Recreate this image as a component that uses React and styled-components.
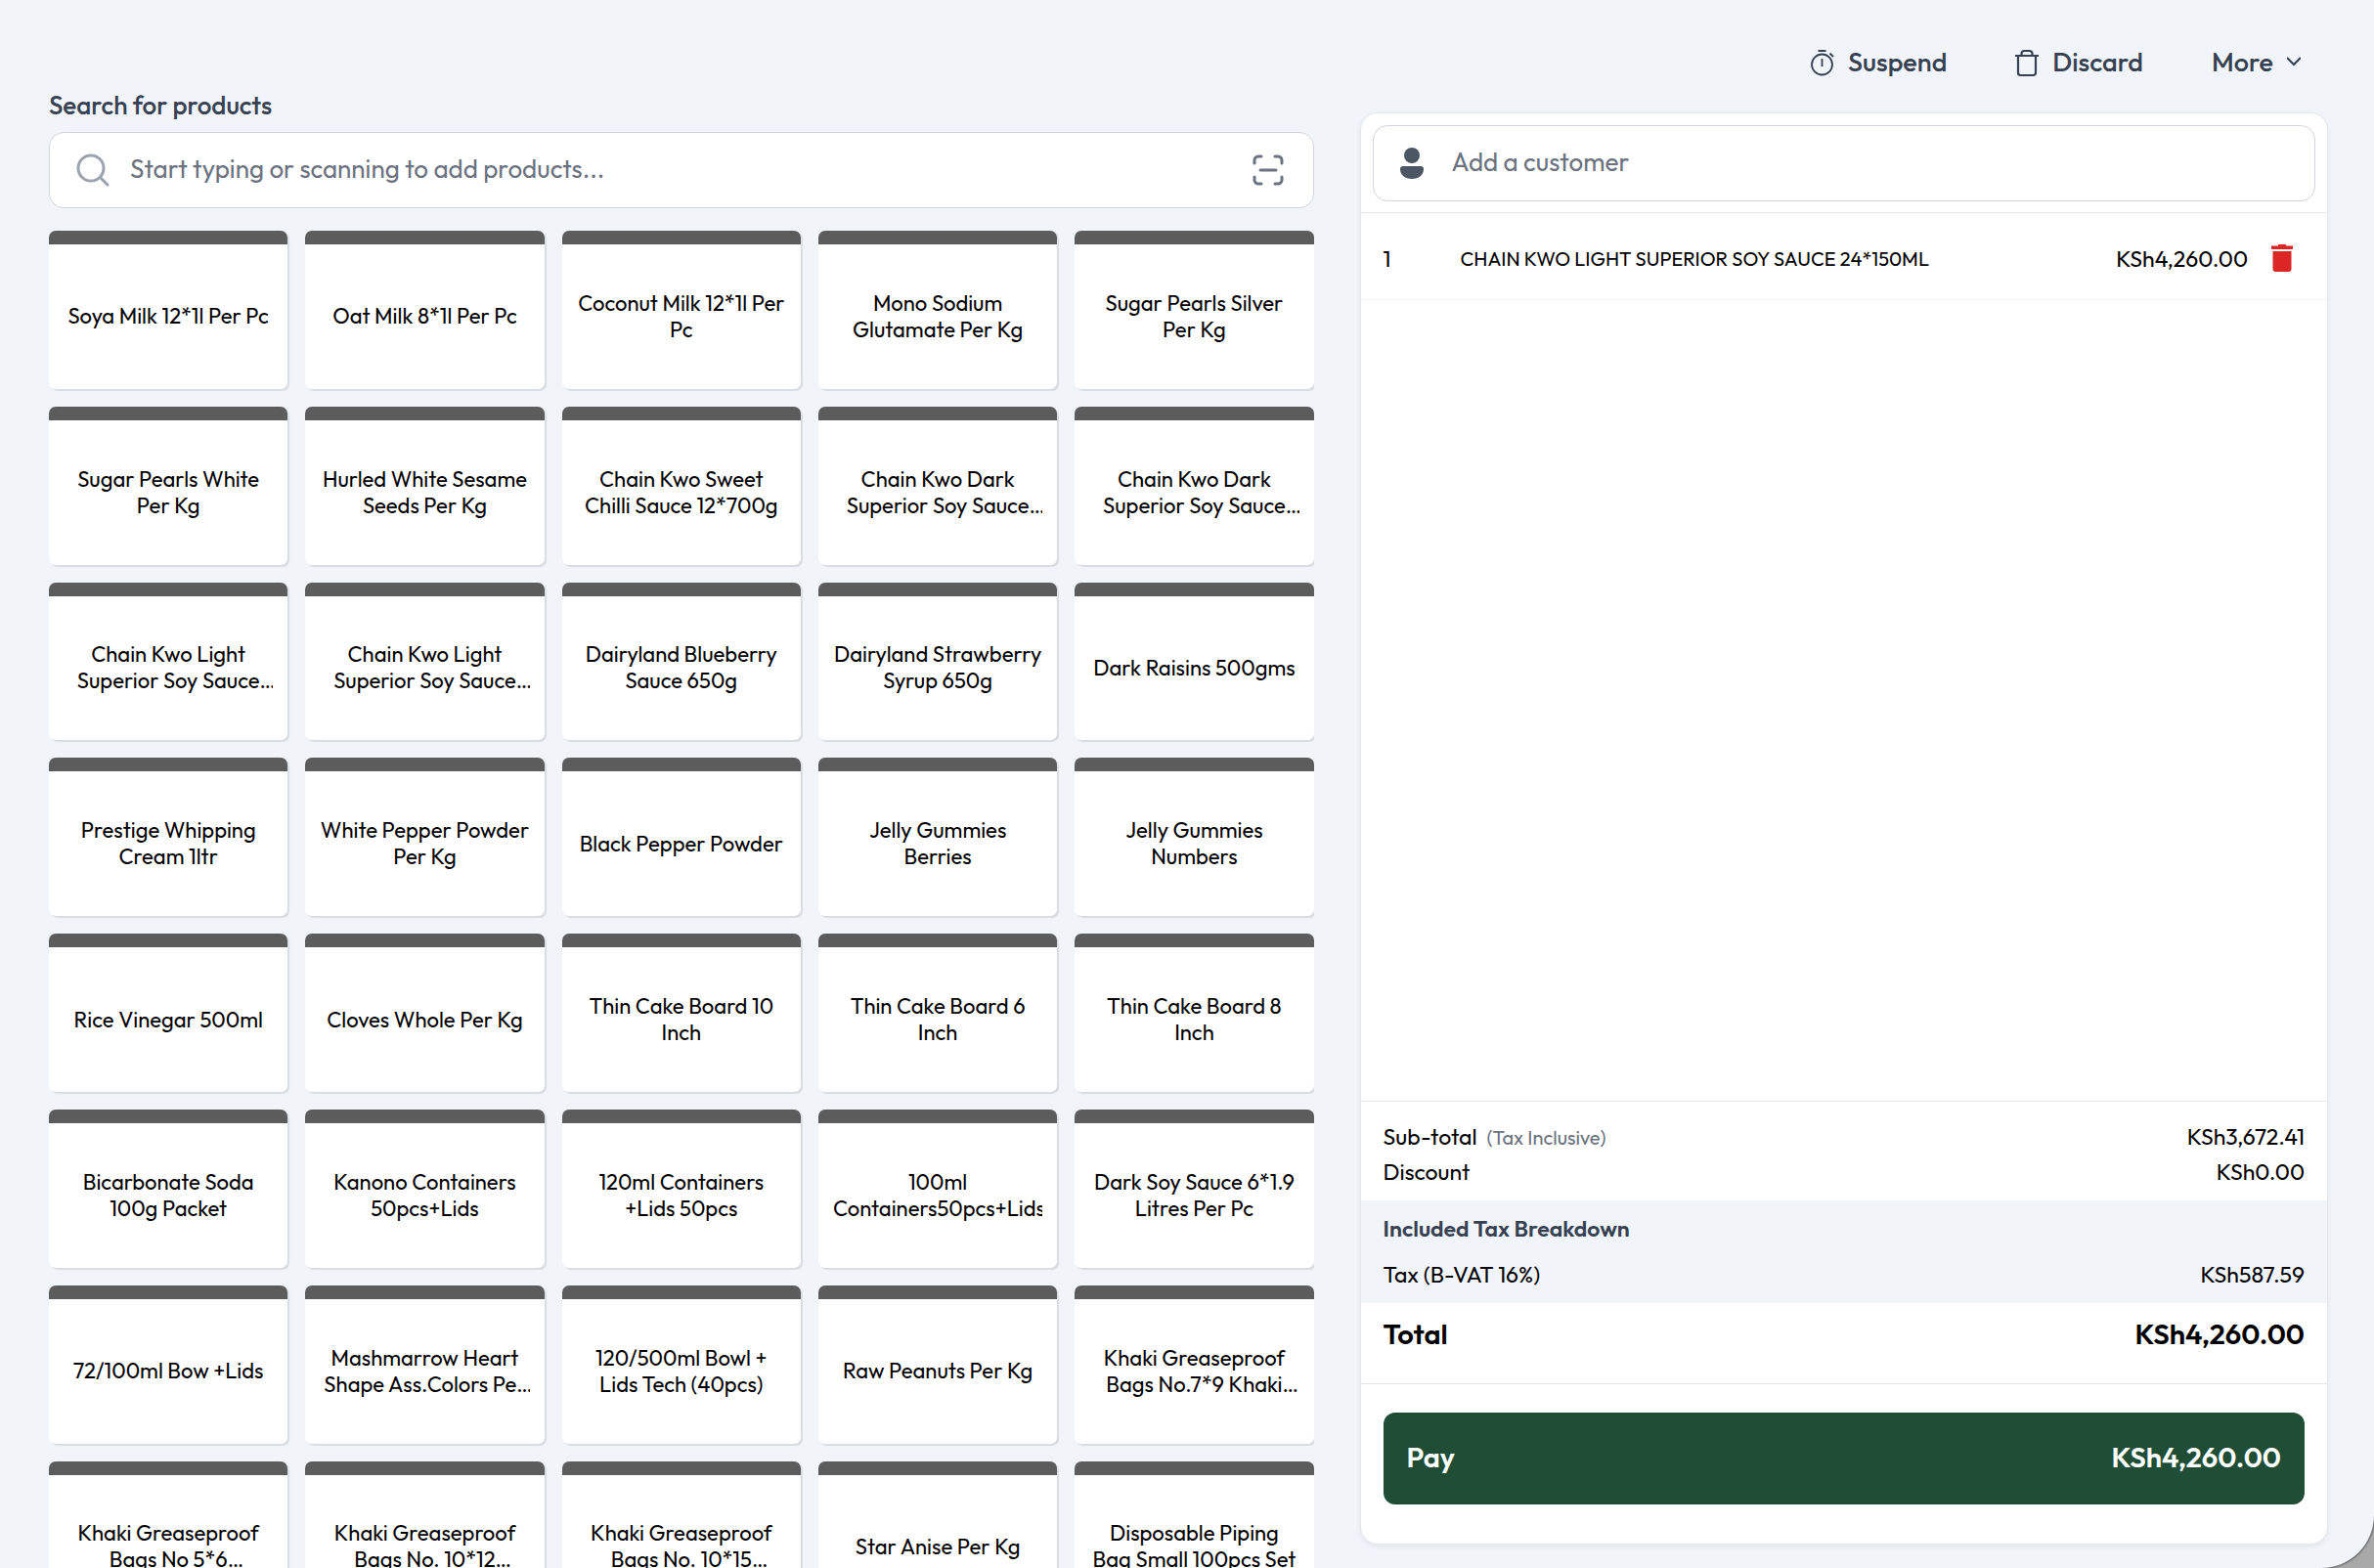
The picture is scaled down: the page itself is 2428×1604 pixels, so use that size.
import { useState } from "react";
import styled, { createGlobalStyle } from "styled-components";

const products = [
  `Soya Milk 12*1l Per Pc`,
  `Oat Milk 8*1l Per Pc`,
  `Coconut Milk 12*1l Per Pc`,
  `Mono Sodium Glutamate Per Kg`,
  `Sugar Pearls Silver Per Kg`,
  `Sugar Pearls White Per Kg`,
  `Hurled White Sesame Seeds Per Kg`,
  `Chain Kwo Sweet Chilli Sauce 12*700g`,
  `Chain Kwo Dark Superior Soy Sauce 24*150ml`,
  `Chain Kwo Dark Superior Soy Sauce 12*500ml`,
  `Chain Kwo Light Superior Soy Sauce 24*150ml`,
  `Chain Kwo Light Superior Soy Sauce 12*500ml`,
  `Dairyland Blueberry Sauce 650g`,
  `Dairyland Strawberry Syrup 650g`,
  `Dark Raisins 500gms`,
  `Prestige Whipping Cream 1ltr`,
  `White Pepper Powder Per Kg`,
  `Black Pepper Powder`,
  `Jelly Gummies\nBerries`,
  `Jelly Gummies\nNumbers`,
  `Rice Vinegar 500ml`,
  `Cloves Whole Per Kg`,
  `Thin Cake Board 10 Inch`,
  `Thin Cake Board 6 Inch`,
  `Thin Cake Board 8 Inch`,
  `Bicarbonate Soda 100g Packet`,
  `Kanono Containers 50pcs+Lids`,
  `120ml Containers +Lids 50pcs`,
  `100ml Containers50pcs+Lids`,
  `Dark Soy Sauce 6*1.9 Litres Per Pc`,
  `72/100ml Bow +Lids`,
  `Mashmarrow Heart Shape Ass.Colors Per Pc`,
  `120/500ml Bowl + Lids Tech (40pcs)`,
  `Raw Peanuts Per Kg`,
  `Khaki Greaseproof Bags No.7*9 Khaki 100pcs`,
  `Khaki Greaseproof Bags No 5*6 Khaki/100pcs`,
  `Khaki Greaseproof Bags No. 10*12 Khaki/100pcs`,
  `Khaki Greaseproof Bags No. 10*15 Khaki/100pcs`,
  `Star Anise Per Kg`,
  `Disposable Piping Bag Small 100pcs Set`,
];

const GlobalStyle = createGlobalStyle`
  * {
    box-sizing: border-box;
  }
  body {
    margin: 0;
    background: #a9a9a9;
    color: #000;
    font-family: Outfit, Lato, sans-serif;
    font-size: 23px;
    line-height: 35px;
  }
  button, input {
    font: inherit;
    color: inherit;
  }
  button {
    border: 0;
    padding: 0;
    background: none;
    cursor: pointer;
  }
`;

const Page = styled.main`
  height: 100vh;
  overflow: hidden;
  display: grid;
  grid-template-columns: 64fr 49fr;
  gap: 47px;
  padding: 0 47px 0 50px;
  background: #f1f5fa;
  border-bottom-right-radius: 54px;
  box-shadow: 0 0 2px 1px #555;
`;

const Catalog = styled.section`
  min-width: 0;
  min-height: 0;
  display: flex;
  flex-direction: column;
  padding-top: 90px;
`;

const SearchLabel = styled.label`
  color: #374151;
  font-size: 26px;
  font-weight: 500;
  margin-bottom: 10px;
`;

const Field = styled.div`
  display: flex;
  align-items: center;
  gap: ${(props) => props.$gap};
  height: 78px;
  flex-shrink: 0;
  padding: 0 30px 0 26px;
  background: #fff;
  border: 1px solid #d1d5db;
  border-radius: 15px;
`;

const FieldInput = styled.input`
  flex: 1;
  min-width: 0;
  border: 0;
  outline: 0;
  padding: 0 0 3px;
  background: none;
  font-size: 26px;
  &::placeholder {
    color: #6b7280;
    opacity: 1;
  }
`;

const ScanButton = styled.button`
  display: flex;
  color: #6b7280;
`;

const Grid = styled.div`
  flex: 1;
  min-height: 0;
  overflow: hidden;
  display: grid;
  grid-template-columns: repeat(5, minmax(0, 1fr));
  align-content: start;
  gap: 18px;
  margin-top: 23px;
`;

const Card = styled.button`
  aspect-ratio: 151 / 100;
  display: flex;
  align-items: center;
  justify-content: center;
  padding: 0 15px;
  background: #fff;
  border-top: 14px solid #5c5c5c;
  border-radius: 7px;
  box-shadow: 2px 2px 1px #d9dde2;
`;

/* names stay on two lines, the rest is cut with an ellipsis */
const CardName = styled.span`
  display: -webkit-box;
  -webkit-box-orient: vertical;
  -webkit-line-clamp: 2;
  max-width: 100%;
  overflow: hidden;
  font-size: 22px;
  line-height: 27px;
  text-align: center;
  white-space: pre-line;
`;

const Sale = styled.section`
  min-width: 0;
  min-height: 0;
  display: flex;
  flex-direction: column;
  padding-bottom: 24px;
`;

const Actions = styled.div`
  display: flex;
  justify-content: flex-end;
  align-items: center;
  gap: 70px;
  height: 115px;
  flex-shrink: 0;
  padding: 12px 28px 0 0;
`;

const Action = styled.button`
  display: flex;
  align-items: center;
  gap: 14px;
  color: #374151;
  font-size: 27px;
  font-weight: 500;
`;

const Panel = styled.div`
  flex: 1;
  min-height: 0;
  display: flex;
  flex-direction: column;
  background: #fff;
  border: 1px solid #e5e7eb;
  border-radius: 18px;
  box-shadow: 0 2px 4px #e2e5ea;
`;

const Customer = styled.div`
  padding: 12px 12px 11px;
  border-bottom: 1px solid #e5e7eb;
`;

const Lines = styled.ul`
  flex: 1;
  margin: 0;
  padding: 0;
  list-style: none;
`;

const Line = styled.li`
  display: flex;
  align-items: center;
  height: 89px;
  padding: 4px 35px 0 23px;
  border-bottom: 1px solid #f3f4f6;
`;

const Quantity = styled.span`
  width: 79px;
`;

const LineName = styled.span`
  flex: 1;
  font-size: 20px;
`;

const RemoveButton = styled.button`
  display: flex;
  margin-left: 24px;
  color: #dc2626;
`;

const Totals = styled.div`
  padding: 18px 0 33px;
  border-top: 1px solid #e5e7eb;
  border-bottom: 1px solid #e5e7eb;
`;

const Row = styled.div`
  display: flex;
  justify-content: space-between;
  padding: 0 23px;
`;

const Note = styled.small`
  margin-left: 10px;
  color: #6b7280;
  font-size: 20px;
`;

const TaxBox = styled.div`
  margin: 12px 0 14px;
  padding: 11px 0 12px;
  background: #f1f5fa;
`;

const TaxTitle = styled.h2`
  margin: 0 0 12px;
  padding: 0 23px;
  color: #374151;
  font-size: 23px;
  font-weight: 600;
`;

const TotalRow = styled(Row)`
  font-size: 29px;
  font-weight: 600;
`;

const Footer = styled.div`
  padding: 29px 23px 40px;
`;

const PayButton = styled.button`
  display: flex;
  justify-content: space-between;
  align-items: center;
  width: 100%;
  height: 94px;
  padding: 0 24px 4px;
  background: #1f4d36;
  color: #fff;
  border-radius: 12px;
  font-size: 29px;
  font-weight: 600;
`;

const SearchIcon = () => (
  <svg width="36" height="36" viewBox="0 0 36 36" fill="none" stroke="#9ca3af" strokeWidth="3" strokeLinecap="round">
    <circle cx="16" cy="16" r="13" />
    <path d="M25.500 25.500L33 33" />
  </svg>
);

const ScanIcon = () => (
  <svg width="32" height="32" viewBox="0 0 32 32" fill="none" stroke="currentColor" strokeWidth="3" strokeLinecap="round">
    <path d="M2 9V6a4 4 0 0 1 4-4h3M23 2h3a4 4 0 0 1 4 4v3M30 23v3a4 4 0 0 1-4 4h-3M9 30H6a4 4 0 0 1-4-4v-3M8 16h16" />
  </svg>
);

const PersonIcon = () => (
  <svg width="26" height="32" viewBox="1 0 26 32" fill="#4b5563">
    <circle cx="14" cy="8" r="8" />
    <path d="M5 19h18a3 3 0 0 1 3 3c0 6-5 10-12 10S2 28 2 22a3 3 0 0 1 3-3z" />
  </svg>
);

const TimerIcon = () => (
  <svg width="24" height="28" viewBox="0 0 24 28" fill="none" stroke="currentColor" strokeWidth="1.800">
    <circle cx="11.500" cy="16" r="10.500" />
    <path d="M11.500 10v8M7.500 2h8M19.500 4.500l3.500 3.500" />
  </svg>
);

const BinIcon = () => (
  <svg width="24" height="28" viewBox="0 0 24 28" fill="none" stroke="currentColor" strokeWidth="2.200">
    <path d="M0 7h24M6.500 7V4.500A3 3 0 0 1 9.500 2h5a3 3 0 0 1 3 2.500V7M3 7v17.500A2.500 2.500 0 0 0 5.500 27h13a2.500 2.500 0 0 0 2.500-2.500V7" />
  </svg>
);

const ChevronIcon = () => (
  <svg width="14" height="12" viewBox="0 0 14 12" fill="none" stroke="currentColor" strokeWidth="2.200">
    <path d="M0 1l7 7 7-7" />
  </svg>
);

const TrashIcon = () => (
  <svg width="22" height="28" viewBox="0 0 22 28" fill="currentColor">
    <path d="M7 0h8v1.500h7v3.500H0V1.500h7zM1.500 7h19v18a3 3 0 0 1-3 3h-13a3 3 0 0 1-3-3z" />
  </svg>
);

export default function App() {
  const [search, setSearch] = useState(``);
  const [customer, setCustomer] = useState(``);

  return (
    <>
      <GlobalStyle />
      <Page>
        <Catalog>
          <SearchLabel htmlFor="search">Search for products</SearchLabel>
          <Field $gap="20px">
            <SearchIcon />
            <FieldInput
              id="search"
              value={search}
              onChange={(e) => setSearch(e.target.value)}
              placeholder="Start typing or scanning to add products..."
            />
            <ScanButton aria-label="Scan barcode">
              <ScanIcon />
            </ScanButton>
          </Field>
          <Grid>
            {products.map((name, i) => (
              <Card key={i}>
                <CardName>{name}</CardName>
              </Card>
            ))}
          </Grid>
        </Catalog>

        <Sale>
          <Actions>
            <Action>
              <TimerIcon /> Suspend
            </Action>
            <Action>
              <BinIcon /> Discard
            </Action>
            <Action>
              More <ChevronIcon />
            </Action>
          </Actions>
          <Panel>
            <Customer>
              <Field $gap="28px">
                <PersonIcon />
                <FieldInput
                  aria-label="Add a customer"
                  value={customer}
                  onChange={(e) => setCustomer(e.target.value)}
                  placeholder="Add a customer"
                />
              </Field>
            </Customer>
            <Lines>
              <Line>
                <Quantity>1</Quantity>
                <LineName>CHAIN KWO LIGHT SUPERIOR SOY SAUCE 24*150ML</LineName>
                <span>KSh4,260.00</span>
                <RemoveButton aria-label="Remove item">
                  <TrashIcon />
                </RemoveButton>
              </Line>
            </Lines>
            <Totals>
              <Row>
                <span>
                  Sub-total<Note>(Tax Inclusive)</Note>
                </span>
                <span>KSh3,672.41</span>
              </Row>
              <Row>
                <span>Discount</span>
                <span>KSh0.00</span>
              </Row>
              <TaxBox>
                <TaxTitle>Included Tax Breakdown</TaxTitle>
                <Row>
                  <span>Tax (B-VAT 16%)</span>
                  <span>KSh587.59</span>
                </Row>
              </TaxBox>
              <TotalRow>
                <span>Total</span>
                <span>KSh4,260.00</span>
              </TotalRow>
            </Totals>
            <Footer>
              <PayButton>
                <span>Pay</span>
                <span>KSh4,260.00</span>
              </PayButton>
            </Footer>
          </Panel>
        </Sale>
      </Page>
    </>
  );
}
